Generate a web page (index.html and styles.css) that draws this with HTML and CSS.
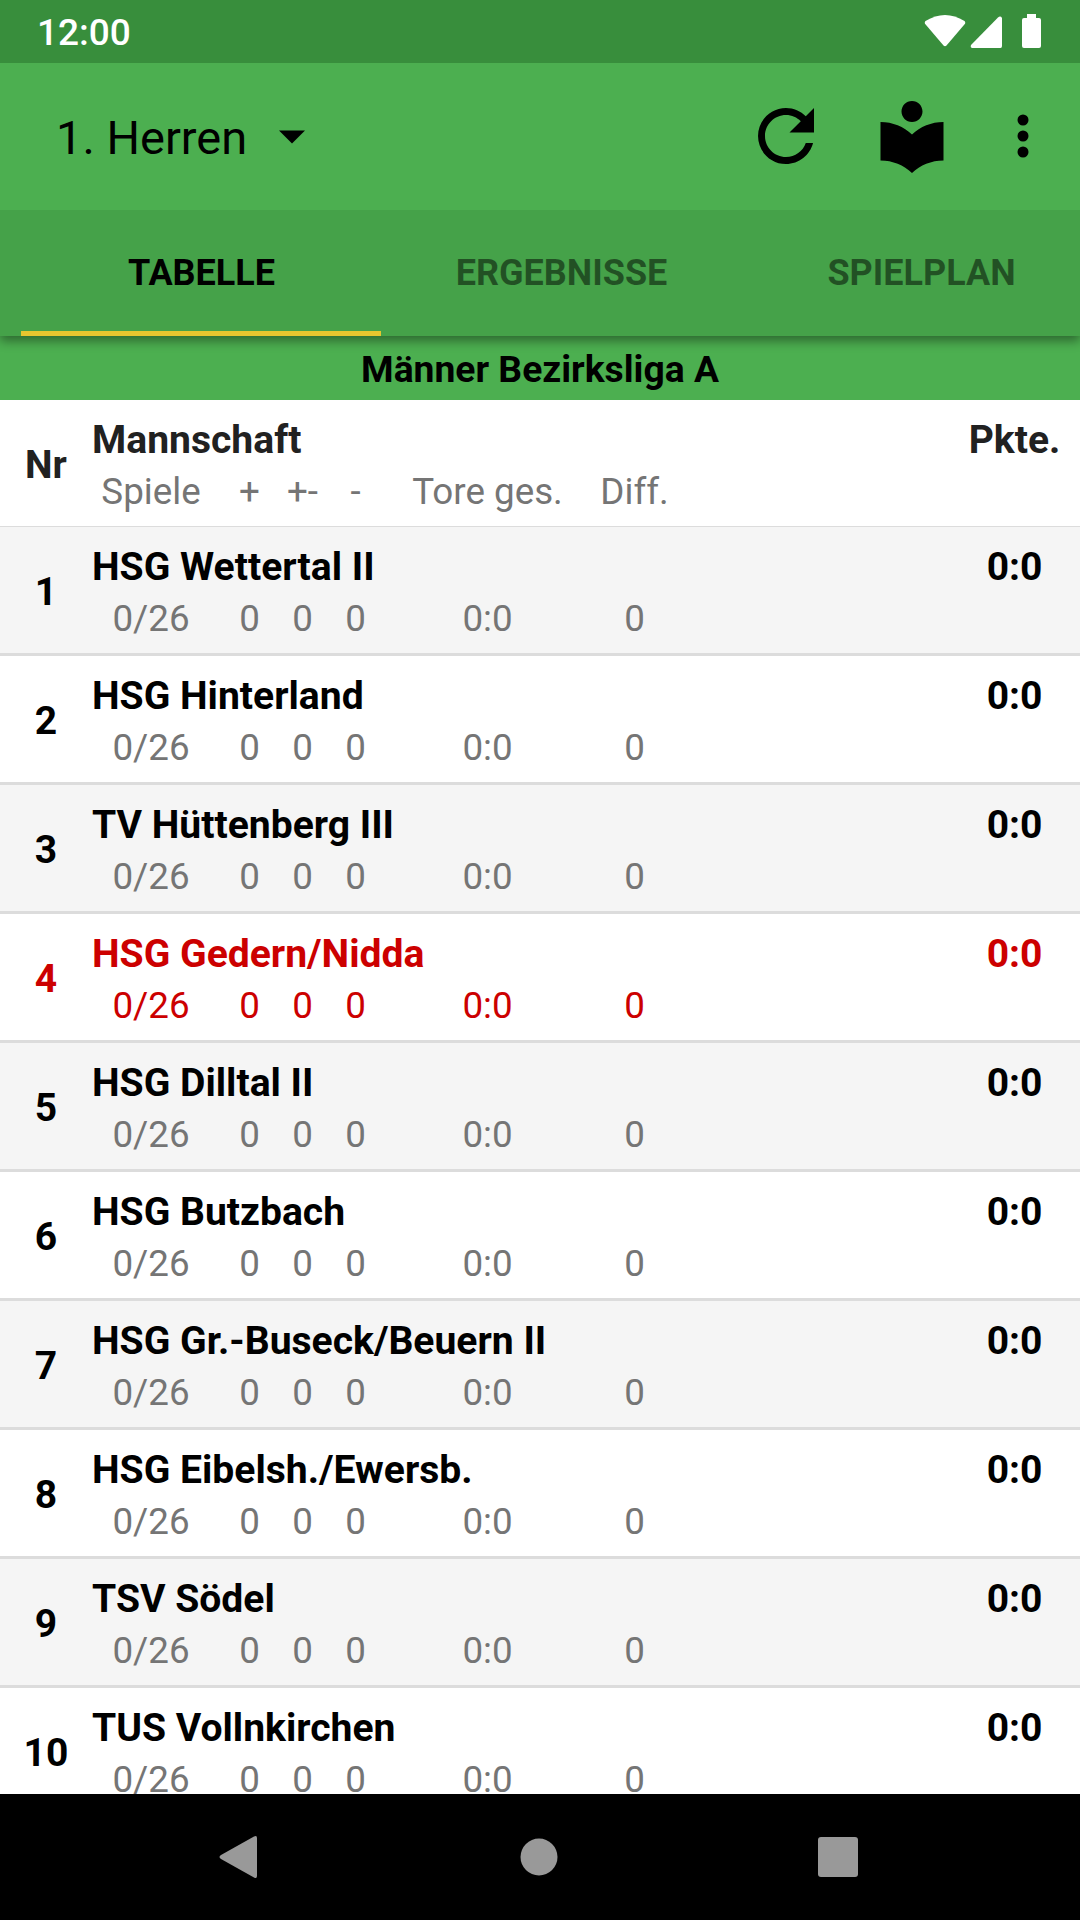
FILE: index.html
```html
<!DOCTYPE html>
<html lang="de">

<head>
    <meta charset="UTF-8">
    <meta name="viewport" content="width=device-width, initial-scale=1.0">
    <title>Tabelle</title>
    <link rel="stylesheet" href="styles.css">
</head>

<body>
    <div class="status-bar">
        <span class="clock">12:00</span>
        <svg class="status-icons" width="118" height="36" viewBox="0 0 118 36">
            <path d="M1.5 7Q21-5 40.500 7Q41.800 8.500 40.800 10L22.500 31.500Q21 33 19.500 31.500L1.200 10Q0.200 8.500 1.500 7Z" />
            <path d="M74 3.500Q76.500 1.500 78 4V32Q78 34 76.500 34H48.500Q46 34 47 31Z" />
            <path d="M103 0H112V4H115Q117 4 117 6V32Q117 34 115 34H100Q98 34 98 32V6Q98 4 100 4H103Z" />
        </svg>
    </div>

    <div class="toolbar">
        <span class="team-select">1. Herren</span>
        <svg class="arrow" width="26" height="14" viewBox="0 0 26 14">
            <path d="M0 0.500H26L13 13.500Z" />
        </svg>
        <svg class="refresh" width="84" height="84" viewBox="0 0 24 24">
            <path d="M17.650 6.350C16.200 4.900 14.210 4 12 4c-4.420 0-7.990 3.580-7.990 8s3.570 8 7.990 8c3.730 0 6.840-2.550 7.730-6h-2.080c-.82 2.330-3.040 4-5.650 4-3.310 0-6-2.690-6-6s2.690-6 6-6c1.660 0 3.140.69 4.220 1.780L13 11h7V4l-2.350 2.350z" />
        </svg>
        <svg class="reader" width="84" height="84" viewBox="0 0 24 24">
            <path d="M12 11.550C9.640 9.350 6.480 8 3 8v11c3.480 0 6.640 1.350 9 3.550 2.360-2.190 5.520-3.550 9-3.550V8c-3.480 0-6.640 1.350-9 3.550zM12 8c1.660 0 3-1.340 3-3s-1.340-3-3-3-3 1.340-3 3 1.340 3 3 3z" />
        </svg>
        <svg class="more" width="12" height="44" viewBox="0 0 12 44">
            <circle cx="6" cy="6" r="5.500" />
            <circle cx="6" cy="22" r="5.500" />
            <circle cx="6" cy="38" r="5.500" />
        </svg>
    </div>

    <div class="tabs">
        <div class="tab active">TABELLE</div>
        <div class="tab">ERGEBNISSE</div>
        <div class="tab">SPIELPLAN</div>
    </div>

    <div class="league">Männer Bezirksliga A</div>

    <div class="table" id="table">
        <div class="row head">
            <div class="nr">Nr</div>
            <div class="info">
                <div class="name">Mannschaft</div>
                <div class="stats">
                    <span>Spiele</span><span>+</span><span>+-</span><span>-</span><span>Tore ges.</span><span>Diff.</span>
                </div>
            </div>
            <div class="points">Pkte.</div>
        </div>
    </div>

    <div class="nav-bar">
        <svg width="40" height="44" viewBox="0 0 40 44">
            <path d="M35 1.500Q38 0 38 3V41Q38 44 35 42.500L2 24Q-1 22 2 20Z" />
        </svg>
        <svg width="38" height="38" viewBox="0 0 38 38">
            <circle cx="19" cy="19" r="18.500" />
        </svg>
        <svg width="40" height="40" viewBox="0 0 40 40">
            <rect width="40" height="40" rx="3" />
        </svg>
    </div>

    <script>
        const ownTeam = 'HSG Gedern/Nidda';
        const teams = [
            'HSG Wettertal II',
            'HSG Hinterland',
            'TV Hüttenberg III',
            'HSG Gedern/Nidda',
            'HSG Dilltal II',
            'HSG Butzbach',
            'HSG Gr.-Buseck/Beuern II',
            'HSG Eibelsh./Ewersb.',
            'TSV Södel',
            'TUS Vollnkirchen'
        ];

        const table = document.getElementById('table');
        teams.forEach((team, i) => {
            const row = document.createElement('div');
            row.className = team === ownTeam ? 'row own' : 'row';
            row.innerHTML = `
                <div class="nr">${i + 1}</div>
                <div class="info">
                    <div class="name">${team}</div>
                    <div class="stats">
                        <span>0/26</span><span>0</span><span>0</span><span>0</span><span>0:0</span><span>0</span>
                    </div>
                </div>
                <div class="points">0:0</div>`;
            table.appendChild(row);
        });
    </script>
</body>

</html>
```
FILE: styles.css
```css
* {
    box-sizing: border-box;
}

body {
    margin: 0;
    height: 1920px;
    display: flex;
    flex-direction: column;
    overflow: hidden;
    font-family: Roboto, sans-serif;
    background-color: #fff;
    color: #000;
}

svg {
    display: block;
    flex: none;
}

.status-bar {
    height: 63px;
    flex: none;
    display: flex;
    justify-content: space-between;
    align-items: flex-start;
    padding: 10px 38px 0 37px;
    background-color: #388e3c;
}

.clock {
    font-size: 37px;
    font-weight: 500;
    line-height: 46px;
    color: #fff;
}

.status-icons {
    margin-top: 4px;
    fill: #fff;
}

.toolbar {
    height: 147px;
    flex: none;
    display: flex;
    align-items: center;
    padding: 0 51px 2px 56px;
    background-color: #4caf50;
}

.team-select {
    font-size: 47px;
    line-height: 56px;
    margin-top: 5px;
}

.arrow {
    margin-left: 32px;
    margin-top: 2px;
}

.refresh {
    margin-left: auto;
}

.reader {
    margin-left: 42px;
}

.more {
    margin-left: 63px;
}

.tabs {
    height: 126px;
    flex: none;
    display: flex;
    padding: 0 21px;
    background-color: #45a249;
    box-shadow: 0 5px 10px rgba(0, 0, 0, 0.4);
    clip-path: inset(0 0 -30px 0);
    z-index: 1;
}

.tab {
    width: 360px;
    flex: none;
    padding: 5px 0 0 1px;
    border-bottom: 5px solid transparent;
    text-align: center;
    font-size: 36px;
    font-weight: 700;
    line-height: 116px;
    color: rgba(0, 0, 0, 0.5);
}

.tab.active {
    color: #000;
    border-bottom-color: #e6c62f;
}

.league {
    height: 64px;
    flex: none;
    padding-top: 1px;
    text-align: center;
    font-size: 37.25px;
    font-weight: 700;
    line-height: 64px;
    background-color: #4caf50;
}

.table {
    flex: 1;
    min-height: 0;
    overflow: hidden;
}

.row {
    height: 129px;
    display: flex;
    background-color: #fff;
    border-bottom: 3px solid #dcdcdc;
}

.row:nth-child(even) {
    background-color: #f5f5f5;
}

.row.head {
    height: 127px;
    color: #212121;
    border-bottom: 1px solid #dcdcdc;
}

.nr {
    width: 92px;
    padding-top: 2px;
    text-align: center;
    font-size: 39px;
    font-weight: 700;
    line-height: 126px;
}

.info {
    flex: 1;
    padding-top: 15px;
}

.name {
    font-size: 39.1px;
    font-weight: 700;
    line-height: 50px;
}

.stats {
    display: grid;
    grid-template-columns: 118px 53px 53px 53px 211px 83px;
    margin-top: 2px;
    font-size: 36.75px;
    line-height: 50px;
    text-align: center;
    color: #757575;
}

/* gap between games played and the win/draw/loss columns */
.stats span:nth-child(n + 2) {
    margin-left: 13px;
    margin-right: -13px;
}

.points {
    width: 131px;
    padding-top: 15px;
    text-align: center;
    font-size: 39px;
    font-weight: 700;
    line-height: 50px;
}

.row.own,
.row.own .stats {
    color: #cc0000;
}

.nav-bar {
    height: 126px;
    flex: none;
    display: flex;
    justify-content: space-between;
    align-items: center;
    padding: 0 222px 0 219px;
    background-color: #000;
    fill: #999;
}
```
